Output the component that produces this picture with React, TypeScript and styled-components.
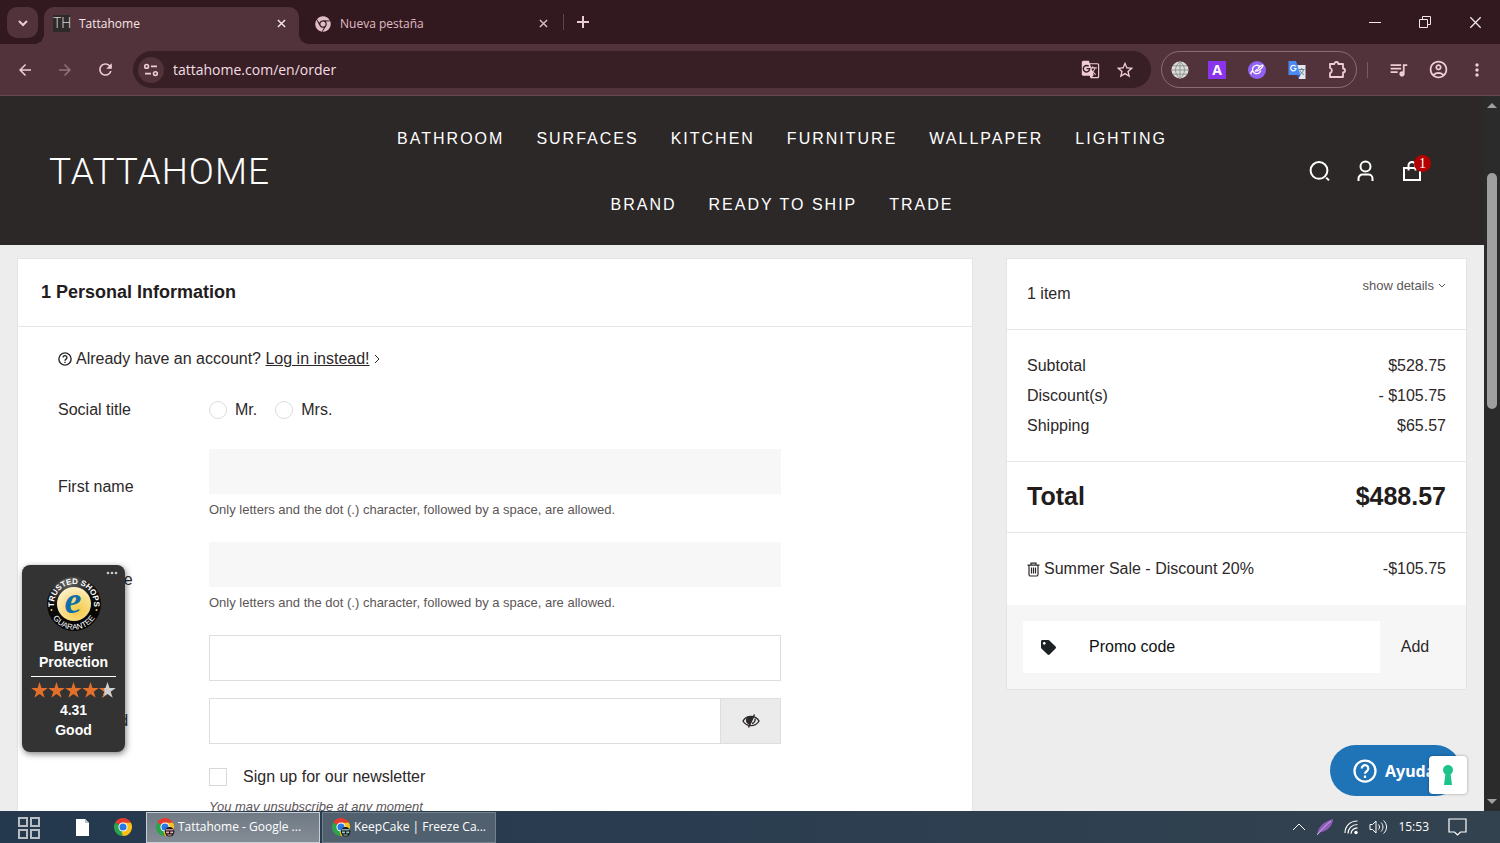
import React from 'react';
import styled, { createGlobalStyle, css } from 'styled-components';
import { FaChrome, FaTag } from 'react-icons/fa';
import {
  MdArrowBack,
  MdArrowForward,
  MdRefresh,
  MdStarBorder,
  MdGTranslate,
  MdOutlineExtension,
  MdQueueMusic,
  MdOutlineAccountCircle,
  MdMoreVert,
} from 'react-icons/md';

const uiFont = "'Open Sans', 'Noto Sans', sans-serif";
const siteFont = "'Liberation Sans', Arial, sans-serif";

const GlobalStyle = createGlobalStyle`
  * { box-sizing: border-box; }
  body { margin: 0; background: #ededed; }
  button, input { font: inherit; color: inherit; margin: 0; }
  button { border: 0; padding: 0; background: none; cursor: pointer; }
  a { color: inherit; }
  svg { display: block; flex: none; }
`;

const Screen = styled.div`
  display: flex;
  flex-direction: column;
  height: 100vh;
  overflow: hidden;
`;

/* ---------- browser chrome ---------- */

const TabStrip = styled.header`
  display: flex;
  align-items: flex-end;
  height: 44px;
  flex: none;
  padding-left: 7px;
  background: #32191f;
  color: #e9cdd3;
  font: 12px/16px ${uiFont};
`;

const TabSearch = styled.button`
  display: grid;
  place-items: center;
  width: 31px;
  height: 31px;
  margin: 0 6px 6px 0;
  border-radius: 10px;
  background: #53333b;
`;

const Tab = styled.div<{ $active?: boolean }>`
  position: relative;
  display: flex;
  align-items: center;
  gap: 9px;
  width: ${(p) => (p.$active ? 255 : 264)}px;
  height: 37px;
  padding: 0 ${(p) => (p.$active ? '13px 4px 9px' : '15px 4px 16px')};
  border-radius: 10px 10px 0 0;
  background: ${(p) => (p.$active ? '#53333b' : 'transparent')};
  color: ${(p) => (p.$active ? '#f7e6e9' : '#e0bcc4')};
  ${(p) =>
    p.$active &&
    css`
      &::before,
      &::after {
        content: '';
        position: absolute;
        bottom: 0;
        width: 10px;
        height: 10px;
      }
      &::before {
        left: -10px;
        background: radial-gradient(circle at 0 0, transparent 10px, #53333b 10px);
      }
      &::after {
        right: -10px;
        background: radial-gradient(circle at 100% 0, transparent 10px, #53333b 10px);
      }
    `}
`;

const TabTitle = styled.span`
  flex: 1;
  white-space: nowrap;
`;

const FavIcon = styled.span`
  display: grid;
  place-items: center;
  width: 17px;
  height: 17px;
  background: #2d2a29;
  color: #d5d0cd;
  font: 300 14px/17px 'Roboto', 'Open Sans', sans-serif;
`;

const TabDivider = styled.span`
  width: 1px;
  height: 16px;
  margin: 0 12px 14px 0;
  background: #5f4148;
`;

const NewTab = styled.button`
  display: grid;
  place-items: center;
  width: 14px;
  height: 44px;
`;

const WindowButtons = styled.div`
  display: flex;
  margin-left: auto;
`;

const WindowButton = styled.button`
  display: grid;
  place-items: center;
  width: 50px;
  height: 44px;
  color: #f2e6e8;
`;

const Toolbar = styled.div`
  display: flex;
  align-items: center;
  height: 52px;
  flex: none;
  padding: 0 4px 0 14px;
  border-bottom: 1px solid #67494f;
  background: #53333b;
  color: #f0cdd5;
  font: 14px/20px ${uiFont};
`;

const ToolButton = styled.button<{ $dim?: boolean; $w?: number }>`
  display: grid;
  place-items: center;
  width: ${(p) => p.$w ?? 40}px;
  height: 32px;
  opacity: ${(p) => (p.$dim ? 0.4 : 1)};
`;

const NavButtons = styled.div`
  display: flex;
  margin-left: -9px;
  margin-right: 8px;
`;

const AddressBar = styled.div`
  display: flex;
  align-items: center;
  flex: 1;
  height: 37px;
  padding: 0 9px 0 5px;
  border-radius: 19px;
  background: #381e25;
`;

const SiteInfo = styled.button`
  display: grid;
  place-items: center;
  width: 26px;
  height: 26px;
  margin-right: 9px;
  border-radius: 50%;
  background: #53333b;
`;

const AddressInput = styled.input`
  flex: 1;
  min-width: 0;
  border: 0;
  padding: 0;
  background: none;
  color: #f4dfe3;
  outline: none;
`;

const Extensions = styled.div`
  display: flex;
  align-items: center;
  height: 37px;
  margin-left: 10px;
  border: 1px solid #8a6e75;
  border-radius: 19px;
`;

const ExtensionButton = styled(ToolButton)`
  width: 40px;
  &:first-child { width: 35px; }
  &:last-child { width: 39px; }
`;

const ToolDivider = styled.span`
  width: 1px;
  height: 16px;
  margin: 0 10px;
  background: #7a5a62;
`;

const LetterTile = styled.span`
  width: 18px;
  height: 18px;
  background: #8a35ec;
  color: #fff;
  font: bold 14px/18px ${uiFont};
`;

/* ---------- page ---------- */

const Viewport = styled.div`
  position: relative;
  display: flex;
  flex: 1;
  min-height: 0;
`;

const Site = styled.div`
  flex: 1;
  min-width: 0;
  overflow: hidden;
  background: #ededed;
  color: #2d2829;
  font: 16px/24px ${siteFont};
`;

const Scrollbar = styled.div`
  display: flex;
  flex-direction: column;
  align-items: center;
  width: 16px;
  padding: 6px 0;
  background: #2b2b2b;
`;

const ScrollTrack = styled.div`
  flex: 1;
  padding-top: 65px;
`;

const ScrollThumb = styled.div`
  width: 10px;
  height: 34%;
  min-height: 236px;
  border-radius: 5px;
  background: #9f9f9f;
`;

const SiteHeader = styled.header`
  display: grid;
  grid-template-columns: 340px minmax(0, 1fr) 260px;
  align-items: center;
  height: 149px;
  background: #2d2828;
  color: #fff;
`;

const Logo = styled.a`
  padding: 3px 0 0 49px;
  font: 300 37px/44px 'Roboto', sans-serif;
  letter-spacing: 1px;
  text-decoration: none;
`;

const MainNav = styled.nav`
  display: flex;
  flex-wrap: wrap;
  justify-content: center;
  padding: 2px 40px 0;
`;

const NavLink = styled.a`
  padding: 0 16px;
  font-size: 16px;
  line-height: 66px;
  letter-spacing: 2px;
  white-space: nowrap;
  text-decoration: none;
`;

const HeaderIcons = styled.div`
  display: flex;
  gap: 22px;
  padding-left: 84px;
`;

const HeaderIcon = styled.button`
  position: relative;
  width: 24px;
  height: 24px;
`;

const CartCount = styled.span`
  position: absolute;
  top: -4px;
  right: -7px;
  width: 17px;
  height: 17px;
  border-radius: 50%;
  background: #b30000;
  font: 14px/17px 'Liberation Serif', serif;
`;

const Columns = styled.main`
  display: grid;
  grid-template-columns: minmax(0, 956fr) minmax(0, 461fr);
  align-items: start;
  gap: 33px;
  padding: 13px 17px;
`;

const Card = styled.section`
  border: 1px solid #e4e4e4;
  background: #fff;
`;

const StepTitle = styled.h1`
  margin: 0;
  padding: 21px 23px 22px;
  border-bottom: 1px solid #e6e6e6;
  color: #231c1d;
  font-size: 18px;
  line-height: 24px;
`;

const Form = styled.form`
  display: flex;
  flex-direction: column;
  gap: 17px;
  padding: 20px 0 40px 40px;
`;

const LoginPrompt = styled.p`
  display: flex;
  align-items: center;
  gap: 4px;
  margin: 0;
`;

const Row = styled.div`
  display: grid;
  grid-template-columns: 151fr 572fr 191fr;
  align-items: center;
`;

const Options = styled.div`
  display: flex;
  gap: 18px;
  height: 44px;
`;

const Option = styled.label`
  display: flex;
  align-items: center;
  gap: 8px;
`;

const Radio = styled.input`
  appearance: none;
  width: 18px;
  height: 18px;
  border: 1px solid #dcdcdc;
  border-radius: 50%;
  background: #fff;
`;

const Field = styled.div`
  padding-bottom: 5px;
`;

const TextInput = styled.input<{ $outlined?: boolean }>`
  display: block;
  width: 100%;
  height: ${(p) => (p.$outlined ? 46 : 45)}px;
  padding: 0 12px;
  border: ${(p) => (p.$outlined ? '1px solid #dedede' : '0')};
  border-radius: 0;
  background: ${(p) => (p.$outlined ? '#fff' : '#f7f7f7')};
`;

const Hint = styled.small`
  display: block;
  margin-top: 6px;
  color: #5c5657;
  font-size: 13px;
  line-height: 20px;
`;

const PasswordGroup = styled.div`
  display: flex;
`;

const RevealButton = styled.button`
  display: grid;
  place-items: center;
  flex: none;
  width: 60px;
  border: 1px solid #dedede;
  border-left: 0;
  background: #ebebeb;
`;

const Newsletter = styled.div`
  grid-column: 2;
  display: grid;
  grid-template-columns: 18px 1fr;
  column-gap: 16px;
  align-items: center;
  line-height: 32px;
`;

const Checkbox = styled.input`
  appearance: none;
  width: 18px;
  height: 18px;
  border: 1px solid #d8d8d8;
  background: #fff;
`;

const NewsletterHint = styled.em`
  grid-column: 1 / -1;
  margin-top: 4px;
  color: #5c5657;
  font-size: 13px;
  line-height: 20px;
`;

const SummaryBlock = styled.div<{ $pad: string }>`
  display: flex;
  flex-direction: column;
  padding: ${(p) => p.$pad};
  border-bottom: 1px solid #e6e6e6;
  &:last-of-type { border-bottom: 0; }
`;

const SummaryLine = styled.div<{ $big?: boolean }>`
  display: flex;
  align-items: flex-start;
  justify-content: space-between;
  line-height: 30px;
  ${(p) => p.$big && 'font-size: 25px; font-weight: bold; color: #231c1d;'}
`;

const DetailsButton = styled.button`
  display: flex;
  align-items: center;
  gap: 4px;
  color: #5c5657;
  font-size: 13px;
  line-height: 14px;
`;

const Voucher = styled.span`
  display: flex;
  align-items: center;
  gap: 4px;
`;

const PromoForm = styled.form`
  display: flex;
  padding: 16px;
  background: #f6f6f6;
`;

const PromoField = styled.label`
  display: flex;
  align-items: center;
  flex: 1;
  gap: 33px;
  height: 52px;
  padding-left: 18px;
  background: #fff;
  color: #1d2226;
`;

const PromoInput = styled.input`
  flex: 1;
  min-width: 0;
  padding: 0;
  border: 0;
  background: none;
  &::placeholder { color: #111; opacity: 1; }
`;

const AddButton = styled.button`
  width: 70px;
`;

/* ---------- floating widgets ---------- */

const TrustBadge = styled.aside`
  position: absolute;
  left: 22px;
  bottom: 59px;
  display: flex;
  flex-direction: column;
  align-items: center;
  width: 103px;
  height: 187px;
  padding: 10px 9px;
  border-radius: 8px;
  background: #333;
  box-shadow: 1px 2px 6px rgba(0, 0, 0, 0.5);
  color: #fff;
  font: bold 14px/16px ${siteFont};
  text-align: center;
`;

const BadgeMenu = styled.button`
  position: absolute;
  top: 6px;
  right: 7px;
`;

const BadgeLabel = styled.div`
  align-self: stretch;
  margin-top: 5px;
  padding-bottom: 6px;
  border-bottom: 1px solid #fff;
`;

const Stars = styled.div`
  display: flex;
  margin: 5px 0 2px;
`;

const Rating = styled.div`
  line-height: 20px;
`;

const HelpButton = styled.button`
  position: absolute;
  right: 39px;
  bottom: 15px;
  display: flex;
  align-items: center;
  gap: 8px;
  width: 131px;
  height: 51px;
  padding-left: 23px;
  border-radius: 26px;
  background: #1f73b7;
  color: #fff;
  font: bold 16px/24px 'Noto Sans', sans-serif;
`;

const PrivacyButton = styled.button`
  position: absolute;
  right: 33px;
  bottom: 17px;
  display: grid;
  place-items: center;
  width: 38px;
  height: 38px;
  border-radius: 4px;
  background: #fff;
  box-shadow: 0 0 3px rgba(0, 0, 0, 0.35);
`;

/* ---------- taskbar ---------- */

const Taskbar = styled.footer`
  display: flex;
  align-items: center;
  flex: none;
  height: 32px;
  padding: 0 33px 0 16px;
  background: linear-gradient(90deg, #25394e, #2a3d50 45%, #33424f);
  color: #fff;
  font: 12px/16px ${uiFont};
`;

const Pinned = styled.div`
  display: flex;
  align-items: center;
  width: 130px;
  flex: none;
`;

const PinnedButton = styled.button`
  display: grid;
  place-items: center;
  width: 24px;
  height: 32px;
  & + & { margin-left: 30px; }
  & + & + & { margin-left: 17px; }
`;

const Task = styled.button<{ $active?: boolean }>`
  display: flex;
  align-items: center;
  gap: 3px;
  width: 174px;
  height: 31px;
  margin-right: 2px;
  padding: 0 8px;
  border: 1px solid ${(p) => (p.$active ? '#c9ced3' : '#74808b')};
  background: ${(p) => (p.$active ? 'linear-gradient(#6f7a85, #848c95)' : '#51606e')};
  white-space: nowrap;
`;

const Tray = styled.div`
  display: flex;
  align-items: center;
  gap: 10px;
  margin-left: auto;
`;

/* ---------- drawings ---------- */

const Cross = ({ size = 9, w = 2 }: { size?: number; w?: number }) => (
  <svg width={size} height={size} viewBox="0 0 10 10" stroke="currentColor" strokeWidth={w}>
    <path d="M1 1l8 8M9 1l-8 8" />
  </svg>
);

const ChromeLogo = ({ badge }: { badge?: string }) => (
  <svg width="20" height="20" viewBox="0 0 20 20">
    <path d="M10 10L2.2 5.5A9 9 0 0 1 17.8 5.5z" fill="#e33b2e" />
    <path d="M10 10L17.8 5.5A9 9 0 0 1 10 19z" fill="#fbc116" />
    <path d="M10 10L10 19A9 9 0 0 1 2.2 5.5z" fill="#2ba24c" />
    <path d="M10 5.5h7.8L14 12z" fill="#fbc116" />
    <path d="M10 5.5h7.8L16 4H8z" fill="#e33b2e" />
    <path d="M13.9 12.2L10 19l-1.5-4z" fill="#fbc116" />
    <circle cx="10" cy="10" r="4.6" fill="#fff" />
    <circle cx="10" cy="10" r="3.6" fill="#2a78e4" />
    {badge && (
      <g>
        <circle cx="14.6" cy="14.8" r="4.8" fill="#1a1416" />
        <path d="M10.8 12.200h7.600v1.200h-7.600z" fill={badge} />
        <path d="M11 14.400h3v1.800h-3zM15.200 14.400h3v1.800h-3z" fill={badge} />
        <path d="M12 17.400h5.200l-1 1h-3.200z" fill={badge} />
      </g>
    )}
  </svg>
);

const TuneIcon = () => (
  <svg width="16" height="16" viewBox="0 0 16 16" fill="none" stroke="currentColor" strokeWidth="1.6">
    <circle cx="3.6" cy="4.4" r="1.9" />
    <path d="M8 4.4h6M2 11.6h6" />
    <circle cx="12.4" cy="11.6" r="1.9" />
  </svg>
);

const GlobeIcon = () => (
  <svg width="18" height="18" viewBox="0 0 18 18">
    <circle cx="9" cy="9" r="8.5" fill="#dcdedb" />
    <path
      d="M9 .5v17M.5 9h17M2 4.8h14M2 13.2h14M9 .5c-6 5-6 12 0 17M9 .5c6 5 6 12 0 17"
      fill="none"
      stroke="#8f9492"
    />
  </svg>
);

const PlanetIcon = () => (
  <svg width="18" height="18" viewBox="0 0 18 18">
    <circle cx="9" cy="9" r="9" fill="#9061f2" />
    <g fill="none" stroke="#fff" strokeWidth="1.3">
      <path d="M11.500 5.300A4.200 4.200 0 1 0 12.800 9.500" />
      <path d="M10 7.500c2-2.500 4.800-4 5-3 .3 1.200-3 4.300-6.500 6" />
      <path d="M4.600 9.500c-2 2-2.300 3.500-1 3.400" />
      <path d="M7 10.500l2.500-2.500" />
    </g>
  </svg>
);

const TranslateColor = () => (
  <svg width="20" height="20" viewBox="0 0 20 20">
    <path d="M8 5h10.5v14H12z" fill="#e4e8ec" />
    <path d="M1.5 1H9l4.500 14H1.500z" fill="#4a8af4" />
    <path d="M10 15h3.500l-2 3.500z" fill="#2b57b8" />
    <path d="M8.600 6.500a2.700 2.700 0 1 0 .5 2H6.700" fill="none" stroke="#fff" strokeWidth="1.2" />
    <path d="M12 9.500h5.500M14.700 8v1.500M16.500 9.500c-.5 2.500-2 4-3.500 5M13 10.500c.8 2 2 3.300 4 4" fill="none" stroke="#5f7f93" />
  </svg>
);

const stroke = { fill: 'none', stroke: 'currentColor' } as const;

const SearchIcon = () => (
  <svg width="24" height="24" viewBox="0 0 24 24" {...stroke} strokeWidth="2">
    <circle cx="11" cy="11.400" r="8.400" />
    <path d="M18.200 18.600l2.800 2.800" />
  </svg>
);

const UserIcon = () => (
  <svg width="24" height="24" viewBox="0 0 24 24" {...stroke} strokeWidth="2">
    <circle cx="11.500" cy="7.400" r="5" />
    <path d="M4.500 22v-2.500a4 4 0 0 1 4-4h6a4 4 0 0 1 4 4V22" />
  </svg>
);

const BagIcon = () => (
  <svg width="24" height="24" viewBox="0 0 24 24" {...stroke} strokeWidth="2">
    <path d="M4 9h16v12H4z" />
    <path d="M8.500 11.500V6.500a3.500 3.500 0 0 1 7 0v5" />
  </svg>
);

const QuestionIcon = ({ size, w }: { size: number; w: number }) => (
  <svg width={size} height={size} viewBox="0 0 16 16" {...stroke} strokeWidth={w}>
    <circle cx="8" cy="8" r="7" />
    <path d="M5.800 6.400a2.200 2.200 0 1 1 3.400 1.800C8.300 8.800 8 9 8 9.900M8 11v1.600" />
  </svg>
);

const TrashIcon = () => (
  <svg width="13" height="15" viewBox="0 0 13 15" {...stroke} strokeWidth="1.200">
    <path d="M.5 3.200h12M4 3V1.200h5V3M2 3.500v9a1.500 1.500 0 0 0 1.500 1.500h6a1.500 1.500 0 0 0 1.500-1.500v-9M4.500 5.500v6M6.500 5.500v6M8.500 5.500v6" />
  </svg>
);

const EyeOffIcon = () => (
  <svg width="18" height="14" viewBox="0 0 18 14" {...stroke} strokeWidth="1.400">
    <path d="M1 7c3.500-6.200 12.500-6.200 16 0-3.500 6.200-12.500 6.200-16 0z" />
    <path d="M5 4.500C6.500 2.500 9 2.400 11 3L7.500 10C5 9 4.300 6.500 5 4.500z" fill="currentColor" />
    <path d="M12.500.5L6.500 13.500" />
    <path d="M13 4.500c.6 2-.5 4.300-3 5" />
  </svg>
);

const Caret = ({ d, w = 8, h = 8, s = 1 }: { d: string; w?: number; h?: number; s?: number }) => (
  <svg width={w} height={h} viewBox={`0 0 ${w} ${h}`} {...stroke} strokeWidth={s}>
    <path d={d} />
  </svg>
);

const Seal = () => (
  <svg width="56" height="58" viewBox="0 0 56 58">
    <defs>
      <radialGradient id="gold" cx="0.6" cy="0.7" r="0.8">
        <stop offset="0" stopColor="#f6c945" />
        <stop offset="0.5" stopColor="#f8dd86" />
        <stop offset="1" stopColor="#fdf6dc" />
      </radialGradient>
      <radialGradient id="ring" cx="0.4" cy="0.1" r="1">
        <stop offset="0" stopColor="#666" />
        <stop offset="0.5" stopColor="#0c0c0c" />
        <stop offset="1" stopColor="#000" />
      </radialGradient>
      <path id="arcTop" d="M9.500 36.700A20 20 0 1 1 46.500 36.700" />
      <path id="arcBottom" d="M3.300 30A24.700 24.700 0 0 0 52.700 30" />
    </defs>
    <circle cx="28" cy="29" r="27" fill="url(#ring)" />
    <circle cx="28" cy="29" r="17" fill="url(#gold)" />
    <g fill="#fff" fontFamily="Liberation Sans, Arial, sans-serif" fontWeight="bold">
      <text textAnchor="middle" fontSize="8">
        <textPath href="#arcTop" startOffset="50%">TRUSTED SHOPS</textPath>
      </text>
      <text textAnchor="middle" fontWeight="normal" fontSize="8">
        <textPath href="#arcBottom" startOffset="50%">GUARANTEE</textPath>
      </text>
    </g>
    <circle cx="5.500" cy="35" r="1" fill="#f6c945" />
    <circle cx="50.500" cy="35" r="1" fill="#f6c945" />
    <text
      x="27"
      y="38"
      textAnchor="middle"
      fill="#0b6fae"
      fontFamily="Liberation Serif, serif"
      fontStyle="italic"
      fontWeight="bold"
      fontSize="38"
    >
      e
    </text>
  </svg>
);

const starPath = 'M8.500 0l2 6h6.300l-5.100 3.700 2 6.100-5.200-3.800-5.200 3.800 2-6.100L.2 6h6.300z';
const Star = ({ fill }: { fill: number }) => (
  <svg width="17" height="16" viewBox="0 0 17 16">
    {fill < 100 && <path d={starPath} fill="#d0d0d0" />}
    <path d={starPath} fill="#e2702a" style={{ clipPath: `inset(0 ${100 - fill}% 0 0)` }} />
  </svg>
);

/* ---------- data ---------- */

const navItems = [
  'BATHROOM', 'SURFACES', 'KITCHEN', 'FURNITURE', 'WALLPAPER', 'LIGHTING', 'BRAND', 'READY TO SHIP', 'TRADE',
];

const totals = [
  ['Subtotal', '$528.75'],
  ['Discount(s)', '- $105.75'],
  ['Shipping', '$65.57'],
];

const nameFields = [
  { id: 'firstname', label: 'First name' },
  { id: 'lastname', label: 'Last name' },
];

export default function App() {
  return (
    <Screen>
      <GlobalStyle />
      <TabStrip>
        <TabSearch aria-label="Search tabs">
          <Caret w={10} h={8} s={2} d="M1 2l4 4 4-4" />
        </TabSearch>
        <Tab $active>
          <FavIcon>TH</FavIcon>
          <TabTitle>Tattahome</TabTitle>
          <button aria-label="Close tab"><Cross w={1.6} /></button>
        </Tab>
        <Tab>
          <FaChrome size={16} />
          <TabTitle>Nueva pestaña</TabTitle>
          <button aria-label="Close tab"><Cross w={1.6} /></button>
        </Tab>
        <TabDivider />
        <NewTab aria-label="New tab">
          <Caret w={12} h={12} s={2} d="M6 0v12M0 6h12" />
        </NewTab>
        <WindowButtons>
          <WindowButton aria-label="Minimize"><Caret w={12} h={12} s={1} d="M0 6.500h12" /></WindowButton>
          <WindowButton aria-label="Restore">
            <Caret w={12} h={12} s={1} d="M.5 3.500h8v8h-8zM3.500 3V.5h8v8H9" />
          </WindowButton>
          <WindowButton aria-label="Close"><Cross size={13} w={1} /></WindowButton>
        </WindowButtons>
      </TabStrip>

      <Toolbar>
        <NavButtons>
          <ToolButton aria-label="Back"><MdArrowBack size={18} /></ToolButton>
          <ToolButton aria-label="Forward" $dim><MdArrowForward size={18} /></ToolButton>
          <ToolButton aria-label="Reload"><MdRefresh size={19} /></ToolButton>
        </NavButtons>
        <AddressBar>
          <SiteInfo aria-label="Site information"><TuneIcon /></SiteInfo>
          <AddressInput aria-label="Address" defaultValue="tattahome.com/en/order" />
          <ToolButton aria-label="Translate" $w={36}><MdGTranslate size={19} /></ToolButton>
          <ToolButton aria-label="Bookmark" $w={34}><MdStarBorder size={20} /></ToolButton>
        </AddressBar>
        <Extensions>
          <ExtensionButton aria-label="Globe"><GlobeIcon /></ExtensionButton>
          <ExtensionButton aria-label="A"><LetterTile>A</LetterTile></ExtensionButton>
          <ExtensionButton aria-label="Planet"><PlanetIcon /></ExtensionButton>
          <ExtensionButton aria-label="Google Translate"><TranslateColor /></ExtensionButton>
          <ExtensionButton aria-label="Extensions">
            <svg width="20" height="20" viewBox="0 0 20 20" {...stroke} strokeWidth="1.800">
              <path d="M3 4h4.300a2 2 0 0 1 4 0H16v4.500a2 2 0 0 1 0 4V17H3v-4a2.600 2.600 0 0 0 0-5z" strokeLinejoin="round" />
            </svg>
          </ExtensionButton>
        </Extensions>
        <ToolDivider />
        <ToolButton aria-label="Media"><MdQueueMusic size={21} /></ToolButton>
        <ToolButton aria-label="Profile"><MdOutlineAccountCircle size={21} /></ToolButton>
        <ToolButton aria-label="Menu" $w={38}><MdMoreVert size={20} /></ToolButton>
      </Toolbar>

      <Viewport>
        <Site>
          <SiteHeader>
            <Logo href="#home">TATTAHOME</Logo>
            <MainNav>
              {navItems.map((item) => (
                <NavLink key={item} href="#nav">{item}</NavLink>
              ))}
            </MainNav>
            <HeaderIcons>
              <HeaderIcon aria-label="Search"><SearchIcon /></HeaderIcon>
              <HeaderIcon aria-label="Account"><UserIcon /></HeaderIcon>
              <HeaderIcon aria-label="Cart">
                <BagIcon />
                <CartCount>1</CartCount>
              </HeaderIcon>
            </HeaderIcons>
          </SiteHeader>

          <Columns>
            <Card>
              <StepTitle>1 Personal Information</StepTitle>
              <Form>
                <LoginPrompt>
                  <QuestionIcon size={14} w={1.6} />
                  <span>
                    Already have an account? <a href="#login">Log in instead!</a>
                  </span>
                  <Caret w={6} h={10} s={1} d="M1 1l4 4-4 4" />
                </LoginPrompt>
                <Row>
                  <span id="social-title">Social title</span>
                  <Options role="radiogroup" aria-labelledby="social-title">
                    <Option><Radio type="radio" name="title" />Mr.</Option>
                    <Option><Radio type="radio" name="title" />Mrs.</Option>
                  </Options>
                </Row>
                {nameFields.map((f) => (
                  <Row key={f.id}>
                    <label htmlFor={f.id}>{f.label}</label>
                    <Field>
                      <TextInput id={f.id} type="text" />
                      <Hint>Only letters and the dot (.) character, followed by a space, are allowed.</Hint>
                    </Field>
                  </Row>
                ))}
                <Row>
                  <label htmlFor="email">Email</label>
                  <TextInput id="email" type="email" $outlined />
                </Row>
                <Row>
                  <label htmlFor="password">Password</label>
                  <PasswordGroup>
                    <TextInput id="password" type="password" $outlined />
                    <RevealButton type="button" aria-label="Show password"><EyeOffIcon /></RevealButton>
                  </PasswordGroup>
                </Row>
                <Row>
                  <Newsletter>
                    <Checkbox id="newsletter" type="checkbox" />
                    <label htmlFor="newsletter">Sign up for our newsletter</label>
                    <NewsletterHint>You may unsubscribe at any moment</NewsletterHint>
                  </Newsletter>
                </Row>
              </Form>
            </Card>

            <Card>
              <SummaryBlock $pad="20px 20px">
                <SummaryLine>
                  <span>1 item</span>
                  <DetailsButton>
                    show details
                    <Caret w={8} h={6} s={1} d="M1 1l3 3 3-3" />
                  </DetailsButton>
                </SummaryLine>
              </SummaryBlock>
              <SummaryBlock $pad="21px 20px 20px">
                {totals.map(([name, value]) => (
                  <SummaryLine key={name}>
                    <span>{name}</span>
                    <span>{value}</span>
                  </SummaryLine>
                ))}
              </SummaryBlock>
              <SummaryBlock $pad="19px 20px 21px">
                <SummaryLine $big>
                  <span>Total</span>
                  <span>$488.57</span>
                </SummaryLine>
              </SummaryBlock>
              <SummaryBlock $pad="21px 20px">
                <SummaryLine>
                  <Voucher>
                    <button aria-label="Remove voucher"><TrashIcon /></button>
                    Summer Sale - Discount 20%
                  </Voucher>
                  <span>-$105.75</span>
                </SummaryLine>
              </SummaryBlock>
              <PromoForm>
                <PromoField>
                  <FaTag size={15} />
                  <PromoInput aria-label="Promo code" placeholder="Promo code" />
                </PromoField>
                <AddButton type="button">Add</AddButton>
              </PromoForm>
            </Card>
          </Columns>
        </Site>

        <Scrollbar>
          <svg width="10" height="6" viewBox="0 0 10 6"><path d="M0 6l5-5 5 5z" fill="#a0a0a0" /></svg>
          <ScrollTrack><ScrollThumb /></ScrollTrack>
          <svg width="10" height="6" viewBox="0 0 10 6"><path d="M0 0l5 5 5-5z" fill="#a0a0a0" /></svg>
        </Scrollbar>

        <TrustBadge>
          <BadgeMenu aria-label="Badge options">
            <svg width="12" height="4" viewBox="0 0 12 4" fill="#ccc">
              <circle cx="2" cy="2" r="1.300" />
              <circle cx="6" cy="2" r="1.300" />
              <circle cx="10" cy="2" r="1.300" />
            </svg>
          </BadgeMenu>
          <Seal />
          <BadgeLabel>Buyer Protection</BadgeLabel>
          <Stars>
            {[100, 100, 100, 100, 31].map((fill, i) => (
              <Star key={i} fill={fill} />
            ))}
          </Stars>
          <Rating>4.31</Rating>
          <Rating>Good</Rating>
        </TrustBadge>

        <HelpButton>
          <QuestionIcon size={24} w={1.5} />
          Ayuda
        </HelpButton>
        <PrivacyButton aria-label="Privacy settings">
          <svg width="10" height="20" viewBox="0 0 10 20" fill="#1cc48b">
            <circle cx="5" cy="5" r="5" />
            <path d="M2.500 8h5L9 20H1z" />
          </svg>
        </PrivacyButton>
      </Viewport>

      <Taskbar>
        <Pinned>
          <PinnedButton aria-label="Start">
            <svg width="23" height="23" viewBox="0 0 23 23" fill="none" stroke="#b9bcc0" strokeWidth="2">
              <path d="M2 2h8v8H2zM14 2h8v8h-8zM2 14h8v8H2zM14 14h8v8h-8z" />
            </svg>
          </PinnedButton>
          <PinnedButton aria-label="Document">
            <svg width="13" height="17" viewBox="0 0 13 17">
              <path d="M0 0h9l4 4v13H0z" fill="#fff" />
              <path d="M9 0v4h4z" fill="#bcc3c9" />
            </svg>
          </PinnedButton>
          <PinnedButton aria-label="Chrome"><ChromeLogo /></PinnedButton>
        </Pinned>
        <Task $active><ChromeLogo badge="#e9a9b5" />Tattahome - Google ...</Task>
        <Task><ChromeLogo badge="#8fd0cf" />KeepCake | Freeze Ca...</Task>
        <Tray>
          <Caret w={14} h={10} s={1} d="M1 8l6-6 6 6" />
          <svg width="18" height="18" viewBox="0 0 18 18">
            <path d="M1 17C2 9 7 4 17 1c0 6-5 12-12 13z" fill="#8f5cb8" />
            <path d="M1 17C6 11 10 7 15 3" stroke="#d3b0ea" fill="none" />
          </svg>
          <svg width="15" height="16" viewBox="0 0 15 16" {...stroke}>
            <path d="M1 14C1 7 6 2 13.500 2M4 14.500c0-5 4-9 9.500-9M7 14.800c0-3.500 3-6 6.500-6" strokeWidth="1.200" />
            <circle cx="12" cy="13.500" r="1.700" fill="currentColor" stroke="none" />
          </svg>
          <svg width="19" height="16" viewBox="0 0 19 16" {...stroke}>
            <path d="M1 5.500h2.500L7 2v12l-3.500-3.500H1zM9.500 5.500c1.300 1.500 1.300 3.500 0 5M12 3.500c2.600 2.500 2.600 6.500 0 9M14.500 1.500c4 3.500 4 9.500 0 13" />
          </svg>
          <time>15:53</time>
          <svg width="28" height="18" viewBox="0 0 28 18" {...stroke} strokeWidth="1.200">
            <path d="M10 1h17v13h-5.500l-3 3-3-3H10z" />
          </svg>
        </Tray>
      </Taskbar>
    </Screen>
  );
}
